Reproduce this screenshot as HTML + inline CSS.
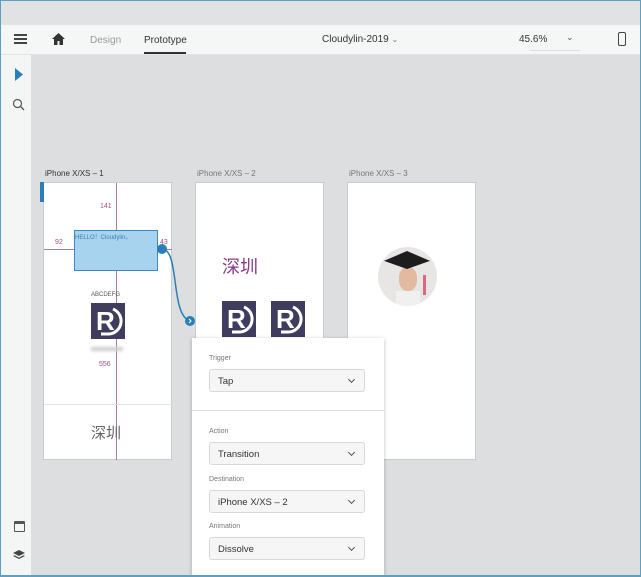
<!DOCTYPE html>
<html><head><meta charset="utf-8"><style>
*{margin:0;padding:0;box-sizing:border-box}
body{width:641px;height:577px;overflow:hidden;position:relative;background:#dcdee0;font-family:"Liberation Sans","Noto Sans CJK SC",sans-serif;}
.abs{position:absolute}
.frame{position:absolute;left:0;top:0;width:641px;height:577px;border:1px solid #5f9fc2;border-bottom:2px solid #5f9fc2;pointer-events:none;z-index:50}
.top{left:0;top:0;width:641px;height:25px;background:#e0e2e4}
.bar{left:0;top:25px;width:641px;height:30px;background:#f5f6f6;border-bottom:1px solid #e2e3e4}
.side{left:0;top:55px;width:31px;height:522px;background:#f4f5f5}
.t{position:absolute;font-size:10px;color:#333;white-space:nowrap}
.ab{position:absolute;background:#fff;border:1px solid #c9cbcd}
.lbl{position:absolute;font-size:8px;color:#777}
.sel{position:absolute;left:17px;width:156px;height:23px;border:1px solid #d8d8d8;border-radius:3px;background:#f6f6f6;font-size:9.5px;color:#333;padding:6px 8px}
.sel:after{content:"";position:absolute;right:10px;top:7px;width:4px;height:4px;border-right:1.3px solid #555;border-bottom:1.3px solid #555;transform:rotate(45deg)}
.r{position:absolute;width:34px;height:36px}
</style></head><body>
<svg width="0" height="0" style="position:absolute"><defs><g id="rl"><rect width="34" height="36" fill="#3f3c5e"/><text x="5" y="27" font-family="Liberation Sans" font-weight="bold" font-size="26" fill="#fff">R</text><path d="M22 6A13 13 0 0 1 18 31L10 31" fill="none" stroke="#fff" stroke-width="3"/></g></defs></svg>
<div class="abs top"></div>
<div class="abs bar">
  <div class="abs" style="left:14px;top:9px;width:13px;height:1.5px;background:#444;box-shadow:0 4px 0 #444,0 8px 0 #444"></div>
  <svg class="abs" style="left:52px;top:8px" width="13" height="12" viewBox="0 0 13 12"><path d="M6.5 0L0 6h2v6h3.5V8h2v4H11V6h2z" fill="#333"/></svg>
  <div class="t" style="left:90px;top:10px;color:#999">Design</div>
  <div class="t" style="left:144px;top:10px">Prototype</div>
  <div class="abs" style="left:144px;top:27px;width:42px;height:2px;background:#333"></div>
  <div class="t" style="left:322px;top:9px">Cloudylin-2019 <span style="color:#777;font-size:8px">⌄</span></div>
  <div class="t" style="left:519px;top:9px">45.6%</div>
  <div class="t" style="left:566px;top:7px;color:#555;font-size:9px">⌄</div>
  <div class="abs" style="left:530px;top:25px;width:50px;height:1px;background:#ddd"></div>
  <div class="abs" style="left:618px;top:7px;width:8px;height:14px;border:1.3px solid #444;border-radius:2px"></div>
</div>
<div class="abs side">
  <svg class="abs" style="left:14px;top:13px" width="10" height="13"><path d="M1 0L9 6.5 1 13z" fill="#2b7fb8"/></svg>
  <svg class="abs" style="left:12px;top:43px" width="13" height="13"><circle cx="5.5" cy="5.5" r="4" fill="none" stroke="#555" stroke-width="1.2"/><path d="M8.5 8.5L12 12" stroke="#555" stroke-width="1.3"/></svg>
  <div class="abs" style="left:14px;top:466px;width:11px;height:11px;border:1.2px solid #555;border-top-width:3px;border-radius:1px"></div>
  <svg class="abs" style="left:13px;top:495px" width="12" height="11"><path d="M6 0L12 3 6 6 0 3z" fill="#444"/><path d="M1.5 5.3L6 7.6 10.5 5.3 12 6 6 9 0 6z" fill="#444"/></svg>
</div>

<div class="lbl" style="left:45px;top:169px;color:#333">iPhone X/XS – 1</div>
<div class="lbl" style="left:197px;top:169px">iPhone X/XS – 2</div>
<div class="lbl" style="left:349px;top:169px">iPhone X/XS – 3</div>

<div class="ab" style="left:43px;top:182px;width:129px;height:278px">
  <div class="abs" style="left:72px;top:0;width:1px;height:277px;background:#a77aa6"></div>
  <div class="abs" style="left:0;top:66px;width:128px;height:1px;background:#a77aa6"></div>
  <div class="abs" style="left:0;top:221px;width:128px;height:1px;background:#e3e3e3"></div>
  <div class="t" style="left:56px;top:20px;font-size:7px;color:#a05090">141</div>
  <div class="t" style="left:11px;top:56px;font-size:7px;color:#a05090">92</div>
  <div class="t" style="left:116px;top:56px;font-size:7px;color:#a05090">43</div>
  <div class="abs" style="left:30px;top:47px;width:84px;height:41px;background:#a8d3ef;border:1px solid #3a88bf"><span class="t" style="left:0;top:1px;font-size:6px;color:#3a7fb0">HELLO！Cloudylin。</span></div>
  <div class="t" style="left:47px;top:109px;font-size:6px;color:#555">ABCDEFG</div>
  <svg class="r" style="left:47px;top:120px"><use href="#rl"/></svg>
  <div class="abs" style="left:47px;top:164px;width:32px;height:4px;background:#ccc;filter:blur(1.5px)"></div>
  <div class="t" style="left:55px;top:178px;font-size:7px;color:#a05090">556</div>
  <div class="t" style="left:47px;top:239px;font-size:15px;color:#666">深圳</div>
</div>
<div class="abs" style="left:40px;top:182px;width:4px;height:20px;background:#2b7fb8"></div>

<div class="ab" style="left:195px;top:182px;width:129px;height:200px">
  <div class="t" style="left:26px;top:70px;font-size:18px;color:#8a3a8a">深圳</div>
  <svg class="r" style="left:26px;top:118px"><use href="#rl"/></svg>
  <svg class="r" style="left:75px;top:118px"><use href="#rl"/></svg>
</div>

<div class="ab" style="left:347px;top:182px;width:129px;height:278px">
  <div class="abs" style="left:30px;top:64px;width:59px;height:59px;border-radius:50%;background:#e8e6e4;overflow:hidden">
    <div class="abs" style="left:21px;top:20px;width:18px;height:24px;border-radius:45%;background:#e3b9a0"></div>
    <div class="abs" style="left:6px;top:4px;width:46px;height:18px;background:#1d1d1f;clip-path:polygon(50% 0,100% 55%,50% 100%,0 55%)"></div>
    <div class="abs" style="left:18px;top:44px;width:24px;height:16px;background:#f0f0f0"></div>
    <div class="abs" style="left:45px;top:28px;width:3px;height:20px;background:#d56a80"></div>
  </div>
</div>

<svg class="abs" style="left:150px;top:240px" width="50" height="90"><path d="M12 9C30 9 20 75 40 81" fill="none" stroke="#2b7fb8" stroke-width="1.5"/><circle cx="12" cy="9" r="5" fill="#2b7fb8"/><circle cx="40" cy="81" r="5" fill="#2b7fb8"/><path d="M39 79l2 2-2 2" stroke="#fff" stroke-width="1" fill="none"/></svg>

<div class="abs" style="left:192px;top:338px;width:192px;height:239px;background:#fff;box-shadow:0 1px 4px rgba(0,0,0,.25)">
  <div class="lbl" style="left:17px;top:17px;font-size:7px">Trigger</div>
  <div class="sel" style="top:31px">Tap</div>
  <div class="abs" style="left:0;top:72px;width:192px;height:1px;background:#ddd"></div>
  <div class="lbl" style="left:17px;top:90px;font-size:7px">Action</div>
  <div class="sel" style="top:104px">Transition</div>
  <div class="lbl" style="left:17px;top:138px;font-size:7px">Destination</div>
  <div class="sel" style="top:152px">iPhone X/XS – 2</div>
  <div class="lbl" style="left:17px;top:185px;font-size:7px">Animation</div>
  <div class="sel" style="top:199px">Dissolve</div>
</div>
<div class="frame"></div>
</body></html>
